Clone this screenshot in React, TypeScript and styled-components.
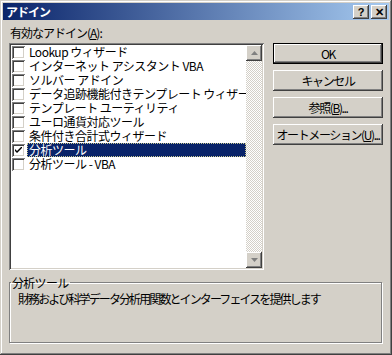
import React from 'react'
import styled, { createGlobalStyle, css } from 'styled-components'

const face = '#d4d0c8'

const GlobalStyle = createGlobalStyle`
  html, body {
    margin: 0;
    padding: 0;
    background: ${face};
  }
  body {
    font-family: 'MS UI Gothic', 'Noto Sans CJK JP', 'Liberation Sans', sans-serif;
    font-size: 12px;
  }
`

const raised = css`
  background: ${face};
  box-shadow: inset -1px -1px #404040, inset 1px 1px #ffffff,
    inset -2px -2px #808080, inset 2px 2px ${face};
`

const sunken = css`
  box-shadow: inset 1px 1px #808080, inset -1px -1px #ffffff,
    inset 2px 2px #404040, inset -2px -2px ${face};
`

const Window = styled.div`
  width: 392px;
  height: 355px;
  box-sizing: border-box;
  padding: 3px;
  display: flex;
  flex-direction: column;
  background: ${face};
  box-shadow: inset -1px -1px #404040, inset 1px 1px ${face},
    inset -2px -2px #808080, inset 2px 2px #ffffff;
`

const TitleBar = styled.div`
  height: 18px;
  display: flex;
  align-items: center;
  padding: 0 2px 0 3px;
  background: linear-gradient(to right, #0a246a, #a6caf0);
`

const Title = styled.div`
  flex: 1;
  color: #fff;
  font-weight: bold;
  font-size: 12px;
  line-height: 14px;
  letter-spacing: -1px;
`

const CaptionButton = styled.div<{ $gap?: number }>`
  ${raised};
  width: 16px;
  height: 14px;
  display: flex;
  align-items: center;
  justify-content: center;
  font-family: 'Liberation Sans', sans-serif;
  font-weight: bold;
  font-size: 11px;
  line-height: 14px;
  color: #000;
  margin-left: ${({ $gap }) => $gap ?? 0}px;
`

const Body = styled.div`
  flex: 1;
  display: flex;
  flex-direction: column;
  padding: 5px 6px 9px 6px;
`

const Main = styled.div`
  display: flex;
  gap: 9px;
`

const LeftCol = styled.div`
  flex: none;
  width: 255px;
  display: flex;
  flex-direction: column;
`

const Label = styled.div`
  height: 14px;
  line-height: 14px;
  margin: 1px 0 3px 1px;
  letter-spacing: -1px;
  color: #000;
`

const ListBox = styled.div`
  ${sunken};
  width: 255px;
  height: 227px;
  box-sizing: border-box;
  padding: 2px;
  background: #fff;
  display: flex;
`

const Items = styled.div`
  flex: 1;
  min-width: 0;
  display: flex;
  flex-direction: column;
  overflow: hidden;
`

const Row = styled.div`
  height: 14px;
  display: flex;
  align-items: center;
`

const Check = styled.div`
  flex: none;
  width: 13px;
  height: 13px;
  box-sizing: border-box;
  margin: 0 2px 0 1px;
  background: #fff;
  ${sunken};
  display: flex;
  align-items: center;
  justify-content: center;
`

const ItemText = styled.div<{ $selected?: boolean }>`
  flex: 1;
  height: 14px;
  line-height: 14px;
  padding-left: 2px;
  box-sizing: border-box;
  white-space: nowrap;
  letter-spacing: -0.5px;
  color: ${({ $selected }) => ($selected ? '#fff' : '#000')};
  background: ${({ $selected }) => ($selected ? '#0a246a' : 'transparent')};
  outline: ${({ $selected }) => ($selected ? '1px dotted #c8c890' : 'none')};
  outline-offset: -1px;
`

const ScrollBar = styled.div`
  flex: none;
  width: 16px;
  display: flex;
  flex-direction: column;
  justify-content: space-between;
  background-color: #fff;
  background-image: repeating-conic-gradient(${face} 0 25%, #fff 0 50%);
  background-size: 2px 2px;
`

const ScrollButton = styled.div`
  ${raised};
  width: 16px;
  height: 16px;
  display: flex;
  align-items: center;
  justify-content: center;
`

const ButtonCol = styled.div`
  flex: none;
  display: flex;
  flex-direction: column;
  gap: 6px;
  padding-top: 18px;
`

const Button = styled.div<{ $default?: boolean }>`
  width: 110px;
  height: 21px;
  box-sizing: border-box;
  display: flex;
  align-items: center;
  justify-content: center;
  white-space: nowrap;
  letter-spacing: -1.4px;
  color: #000;
  line-height: 14px;
  ${raised};
  ${({ $default }) =>
    $default &&
    css`
      border: 1px solid #000;
    `}
`

const GroupBox = styled.fieldset`
  margin: 6px 0 0 0;
  padding: 3px 8px 0 8px;
  height: 67px;
  box-sizing: border-box;
  border: 1px solid #808080;
  box-shadow: 1px 1px #ffffff, inset 1px 1px #ffffff;
  width: 373px;
`

const Legend = styled.legend`
  padding: 0 1px;
  margin-left: -7px;
  line-height: 13px;
  letter-spacing: -0.7px;
  color: #000;
`

const Description = styled.div`
  line-height: 14px;
  letter-spacing: -1.9px;
  white-space: nowrap;
  color: #000;
`

const U = styled.span`
  text-decoration: underline;
`

const Arrow = ({ up }: { up?: boolean }) => (
  <svg width="7" height="4" viewBox="0 0 7 4">
    <path
      d={up ? 'M3.5 0 L7 4 L0 4 Z' : 'M0 0 L7 0 L3.5 4 Z'}
      fill="#808080"
    />
  </svg>
)

const CheckMark = () => (
  <svg width="7" height="7" viewBox="0 0 7 7">
    <path d="M0 2 L0 4 L2 6 L7 1 L7 -1 L2 4 Z" fill="#000" />
  </svg>
)

const items = [
  { name: 'Lookup ウィザード', checked: false },
  { name: 'インターネット アシスタント VBA', checked: false },
  { name: 'ソルバー アドイン', checked: false },
  { name: 'データ追跡機能付きテンプレート ウィザード', checked: false },
  { name: 'テンプレート ユーティリティ', checked: false },
  { name: 'ユーロ通貨対応ツール', checked: false },
  { name: '条件付き合計式ウィザード', checked: false },
  { name: '分析ツール', checked: true, selected: true },
  { name: '分析ツール - VBA', checked: false },
]

export default function App() {
  return (
    <>
      <GlobalStyle />
      <Window>
        <TitleBar>
          <Title>アドイン</Title>
          <CaptionButton>?</CaptionButton>
          <CaptionButton $gap={2}>✕</CaptionButton>
        </TitleBar>
        <Body>
          <Main>
            <LeftCol>
              <Label>
                有効なアドイン(<U>A</U>):
              </Label>
              <ListBox>
                <Items>
                  {items.map((item) => (
                    <Row key={item.name}>
                      <Check>{item.checked && <CheckMark />}</Check>
                      <ItemText $selected={item.selected}>{item.name}</ItemText>
                    </Row>
                  ))}
                </Items>
                <ScrollBar>
                  <ScrollButton>
                    <Arrow up />
                  </ScrollButton>
                  <ScrollButton>
                    <Arrow />
                  </ScrollButton>
                </ScrollBar>
              </ListBox>
            </LeftCol>
            <ButtonCol>
              <Button $default>OK</Button>
              <Button>キャンセル</Button>
              <Button>
                参照(<U>B</U>)...
              </Button>
              <Button>
                オートメーション(<U>U</U>)...
              </Button>
            </ButtonCol>
          </Main>
          <GroupBox>
            <Legend>分析ツール</Legend>
            <Description>財務および科学データ分析用関数とインターフェイスを提供します</Description>
          </GroupBox>
        </Body>
      </Window>
    </>
  )
}
